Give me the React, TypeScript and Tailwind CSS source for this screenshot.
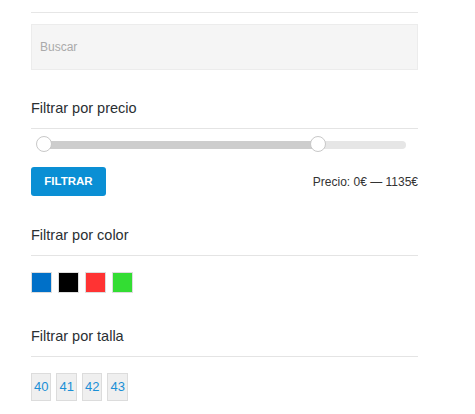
import React from "react";

const font = { fontFamily: '"Liberation Sans", Arial, sans-serif' };

function Heading({ children }: { children: React.ReactNode }) {
  return (
    <div className="border-b border-[#e4e4e4] pb-[10px]">
      <h3 className="text-[14.5px] leading-[20px] text-[#2a2f33]">{children}</h3>
    </div>
  );
}

export default function App() {
  const colors = ["#0070c8", "#000000", "#ff3333", "#33dd33"];
  const sizes = ["40", "41", "42", "43"];
  return (
    <div className="bg-white w-[475px] h-[414px] overflow-hidden" style={font}>
      <div className="ml-[31px] w-[387px]">
        <div className="h-[13px] border-b border-[#e6e6e6]" />
        <div className="mt-[11px] h-[46px] bg-[#f5f5f5] border border-[#ececec] flex items-center px-[8px]">
          <span className="text-[12px] text-[#aaa]">Buscar</span>
        </div>

        <div className="mt-[28px]">
          <Heading>Filtrar por precio</Heading>
        </div>

        <div className="relative h-[25px]">
          <div className="absolute left-[8px] top-[12px] h-[8px] w-[367px] rounded-full bg-[#e6e6e6]" />
          <div className="absolute left-[12px] top-[12px] h-[8px] w-[276px] bg-[#cdcdcd]" />
          <div className="absolute left-[5px] top-[7px] w-[16px] h-[16px] rounded-full bg-white border border-[#c8c8c8]" />
          <div className="absolute left-[279px] top-[7px] w-[16px] h-[16px] rounded-full bg-white border border-[#c8c8c8]" />
        </div>

        <div className="mt-[13px] flex items-center justify-between">
          <button className="w-[75px] h-[29px] rounded-[3px] bg-[#0a8fd4] text-white text-[11.5px] font-bold">
            FILTRAR
          </button>
          <span className="text-[12px] text-[#333] pt-[1px]">Precio: 0€ — 1135€</span>
        </div>

        <div className="mt-[29px]">
          <Heading>Filtrar por color</Heading>
        </div>

        <div className="mt-[16px] flex gap-[6px]">
          {colors.map((c) => (
            <div
              key={c}
              className="w-[21px] h-[21px] border border-[#dddddd]"
              style={{ backgroundColor: c }}
            />
          ))}
        </div>

        <div className="mt-[33px]">
          <Heading>Filtrar por talla</Heading>
        </div>

        <div className="mt-[16px] flex gap-[5px]">
          {sizes.map((s) => (
            <div
              key={s}
              className="h-[28px] px-[2px] bg-[#efefef] border border-[#dcdcdc] flex items-center justify-center text-[13px] text-[#1a8fd6]"
            >
              {s}
            </div>
          ))}
        </div>
      </div>
    </div>
  );
}
